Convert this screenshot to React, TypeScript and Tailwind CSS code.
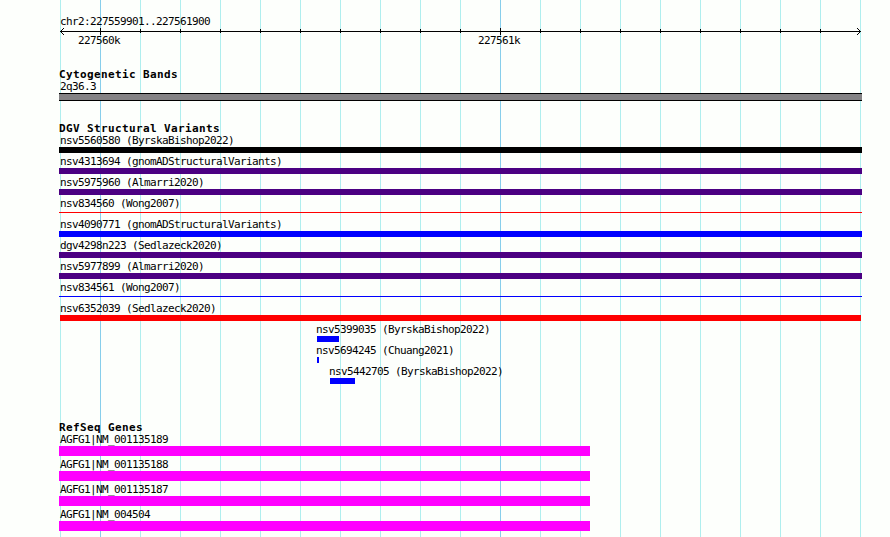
import React from 'react';

interface Feature {
  label: string;
  start: number;
  width: number;
  color: string;
  thin?: boolean;
}

const variants: Feature[] = [
  { label: 'nsv5560580 (ByrskaBishop2022)', start: 0, width: 803, color: 'bg-black' },
  { label: 'nsv4313694 (gnomADStructuralVariants)', start: 0, width: 803, color: 'bg-[#4b0082]' },
  { label: 'nsv5975960 (Almarri2020)', start: 0, width: 803, color: 'bg-[#4b0082]' },
  { label: 'nsv834560 (Wong2007)', start: 0, width: 803, color: 'bg-[#ff0000]', thin: true },
  { label: 'nsv4090771 (gnomADStructuralVariants)', start: 0, width: 803, color: 'bg-[#0000ff]' },
  { label: 'dgv4298n223 (Sedlazeck2020)', start: 0, width: 803, color: 'bg-[#4b0082]' },
  { label: 'nsv5977899 (Almarri2020)', start: 0, width: 803, color: 'bg-[#4b0082]' },
  { label: 'nsv834561 (Wong2007)', start: 0, width: 803, color: 'bg-[#0000ff]', thin: true },
  { label: 'nsv6352039 (Sedlazeck2020)', start: 1, width: 801, color: 'bg-[#ff0000]' },
  { label: 'nsv5399035 (ByrskaBishop2022)', start: 258, width: 22, color: 'bg-[#0000ff]' },
  { label: 'nsv5694245 (Chuang2021)', start: 258, width: 2, color: 'bg-[#0000ff]' },
  { label: 'nsv5442705 (ByrskaBishop2022)', start: 271, width: 25, color: 'bg-[#0000ff]' },
];

const genes = [
  'AGFG1|NM_001135189',
  'AGFG1|NM_001135188',
  'AGFG1|NM_001135187',
  'AGFG1|NM_004504',
];

const gridLines = Array.from({ length: 21 }, (_, i) => i);
const isMajor = (i: number) => i === 1 || i === 11;

const Label: React.FC<{ children: React.ReactNode }> = ({ children }) => (
  <p className="h-[13px] pl-px text-[11px] leading-[13px] tracking-[-0.622px] whitespace-pre">{children}</p>
);

const TrackTitle: React.FC<{ children: React.ReactNode }> = ({ children }) => (
  <h2 className="h-3 text-[11px] leading-[13px] font-bold tracking-[0.378px] whitespace-pre">{children}</h2>
);

const Grid: React.FC = () => (
  <div className="absolute inset-y-0 left-[60px] flex gap-[39px]">
    {gridLines.map((i) => (
      <div key={i} className={`w-px ${isMajor(i) ? 'bg-[#87ceeb]' : 'bg-[#afeeee]'}`}></div>
    ))}
  </div>
);

const Ruler: React.FC = () => (
  <svg
    className="ml-px block h-[6px] w-[802px] overflow-visible"
    viewBox="0 0 802 6"
    shapeRendering="crispEdges"
    fill="#000"
  >
    <rect x="0" y="3" width="801" height="1" />
    {gridLines.slice(1, 20).map((i) => (
      <rect
        key={i}
        x={i * 40}
        y={isMajor(i) ? 0 : 1}
        width="1"
        height={isMajor(i) ? 7 : 4}
      />
    ))}
    {[1, 2, 3].map((d) => (
      <g key={d}>
        <rect x={d} y={3 - d} width="1" height="1" />
        <rect x={d} y={3 + d} width="1" height="1" />
        <rect x={800 - d} y={3 - d} width="1" height="1" />
        <rect x={800 - d} y={3 + d} width="1" height="1" />
      </g>
    ))}
  </svg>
);

const FeatureRow: React.FC<{ feature: Feature }> = ({ feature }) => (
  <div className="h-[21px]" style={{ paddingLeft: feature.start }}>
    <div className={feature.start === 1 ? '-ml-px' : feature.start > 1 ? '-ml-0.5' : ''}>
      <Label>{feature.label}</Label>
    </div>
    <div
      className={`${feature.thin ? 'mt-0.5 h-px' : 'h-1.5'} ${feature.color}`}
      style={{ width: feature.width }}
    ></div>
  </div>
);

const App: React.FC = () => {
  return (
    <div className="relative h-[537px] w-[890px] overflow-hidden bg-[#fdfffc] font-['DejaVu_Sans_Mono',monospace] text-black">
      <Grid />
      <div className="relative w-[803px] ml-[59px] pt-[15px]">
        <Label>chr2:227559901..227561900</Label>
        <Ruler />
        <div className="flex gap-[357px] pl-[18px]">
          <Label>227560k</Label>
          <Label>227561k</Label>
        </div>

        <section className="mt-[21px]">
          <TrackTitle>Cytogenetic Bands</TrackTitle>
          <Label>2q36.3</Label>
          <div className="h-2 border-y border-black bg-[#848284]"></div>
        </section>

        <section className="mt-[21px]">
          <TrackTitle>DGV Structural Variants</TrackTitle>
          {variants.map((feature) => (
            <FeatureRow key={feature.label} feature={feature} />
          ))}
        </section>

        <section className="mt-[35px]">
          <TrackTitle>RefSeq Genes</TrackTitle>
          {genes.map((gene) => (
            <div key={gene} className="h-[25px]">
              <Label>{gene}</Label>
              <div className="h-2.5 w-[531px] bg-[#ff00ff]"></div>
            </div>
          ))}
        </section>
      </div>
    </div>
  );
};

export default App;
